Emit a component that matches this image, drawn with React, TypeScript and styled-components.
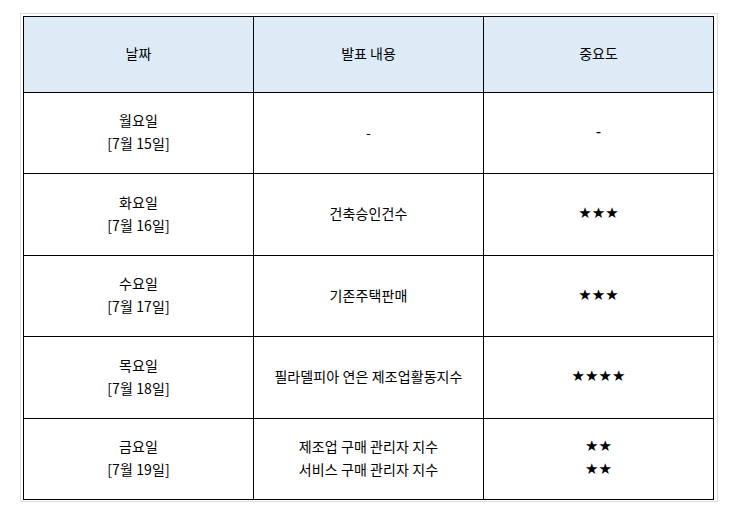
import React from 'react';
import styled, { createGlobalStyle } from 'styled-components';

const GlobalStyle = createGlobalStyle`
	html, body {
		margin: 0;
		padding: 0;
		background: #ffffff;
	}
	body {
		font-family: "Noto Sans CJK KR", "Noto Sans", sans-serif;
		color: #000000;
	}
`;

const Frame = styled.div`
	margin: 13px 0 0 20px;
	width: 693px;
	padding: 2px 1px 1px 2px;
	border: 1px solid #dcdcdc;
`;

const Table = styled.table`
	width: 691px;
	border-collapse: collapse;
	table-layout: fixed;
	font-size: 14px;
	line-height: 23px;
`;

const HeadCell = styled.th`
	height: 73px;
	padding: 0 0 2px;
	border: 1px solid #000000;
	background: #ddebf7;
	font-weight: 400;
	text-align: center;
	vertical-align: middle;
`;

const Cell = styled.td<{ $tall?: boolean }>`
	height: ${(p) => (p.$tall ? 79 : 78)}px;
	padding: 0 0 2px;
	border: 1px solid #000000;
	text-align: center;
	vertical-align: middle;
`;

const Line = styled.div`
	white-space: nowrap;
	letter-spacing: 0.1px;
`;

const Stars = styled.div`
	font-family: "DejaVu Sans", sans-serif;
	font-size: 15px;
`;

type Row = {
	day: string;
	date: string;
	events: string[];
	stars: string[];
};

const rows: Row[] = [
	{ day: '월요일', date: '[7월 15일]', events: ['-'], stars: ['-'] },
	{ day: '화요일', date: '[7월 16일]', events: ['건축승인건수'], stars: ['★★★'] },
	{ day: '수요일', date: '[7월 17일]', events: ['기존주택판매'], stars: ['★★★'] },
	{ day: '목요일', date: '[7월 18일]', events: ['필라델피아 연은 제조업활동지수'], stars: ['★★★★'] },
	{
		day: '금요일',
		date: '[7월 19일]',
		events: ['제조업 구매 관리자 지수', '서비스 구매 관리자 지수'],
		stars: ['★★', '★★'],
	},
];

function App() {
	return (
		<>
			<GlobalStyle />
			<Frame>
				<Table>
					<thead>
						<tr>
							<HeadCell>날짜</HeadCell>
							<HeadCell>발표 내용</HeadCell>
							<HeadCell>중요도</HeadCell>
						</tr>
					</thead>
					<tbody>
						{rows.map((row, i) => (
							<tr key={row.day}>
								<Cell $tall={i % 2 === 1}>
									<Line>{row.day}</Line>
									<Line>{row.date}</Line>
								</Cell>
								<Cell $tall={i % 2 === 1}>
									{row.events.map((e) => (
										<Line key={e}>{e}</Line>
									))}
								</Cell>
								<Cell $tall={i % 2 === 1}>
									{row.stars.map((s, j) => (
										<Stars key={j}>{s}</Stars>
									))}
								</Cell>
							</tr>
						))}
					</tbody>
				</Table>
			</Frame>
		</>
	);
}

export default App;
